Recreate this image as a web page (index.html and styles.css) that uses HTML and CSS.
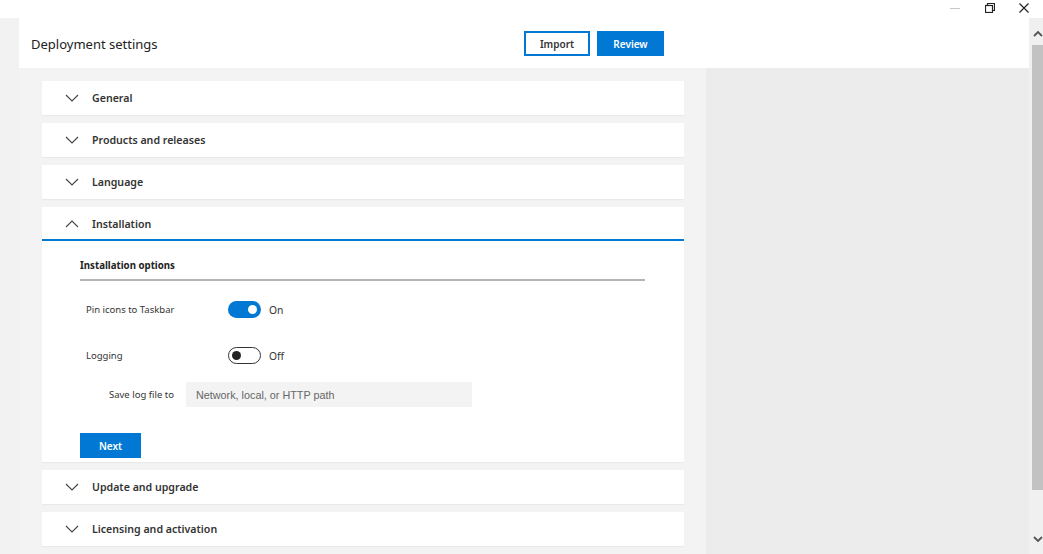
FILE: index.html
```html
<!DOCTYPE html>
<html>
<head>
<meta charset="utf-8">
<link rel="stylesheet" href="styles.css">
</head>
<body>
<div class="window">
  <div class="titlebar">
    <span class="wc wc-min"><svg width="10" height="10" viewBox="0 0 10 10"><line x1="0" y1="5.5" x2="10" y2="5.5" stroke="#c8c8c8" stroke-width="1"/></svg></span>
    <span class="wc wc-max"><svg width="10" height="10" viewBox="0 0 10 10"><rect x="0.5" y="2.5" width="7" height="7" fill="none" stroke="#222" stroke-width="1.2"/><polyline points="2.5,2.5 2.5,0.5 9.5,0.5 9.5,7.5 7.5,7.5" fill="none" stroke="#222" stroke-width="1.2"/></svg></span>
    <span class="wc wc-close"><svg width="10" height="10" viewBox="0 0 10 10"><path d="M0.5 0.5 L9.5 9.5 M9.5 0.5 L0.5 9.5" stroke="#222" stroke-width="1.2"/></svg></span>
  </div>
  <div class="main">
    <div class="leftstrip"></div>
    <div class="app">
      <div class="header">
        <div class="title">Deployment settings</div>
        <div class="actions">
          <button class="btn btn-outline">Import</button>
          <button class="btn btn-primary">Review</button>
        </div>
      </div>
      <div class="body">
        <div class="content">
          <div class="panel">
            <div class="panel-head">
              <svg class="chev" width="14" height="8" viewBox="0 0 14 8"><polyline points="1,1 7,7 13,1" fill="none" stroke="#444" stroke-width="1.1"/></svg>
              <span class="panel-title">General</span>
            </div>
          </div>
          <div class="panel">
            <div class="panel-head">
              <svg class="chev" width="14" height="8" viewBox="0 0 14 8"><polyline points="1,1 7,7 13,1" fill="none" stroke="#444" stroke-width="1.1"/></svg>
              <span class="panel-title">Products and releases</span>
            </div>
          </div>
          <div class="panel">
            <div class="panel-head">
              <svg class="chev" width="14" height="8" viewBox="0 0 14 8"><polyline points="1,1 7,7 13,1" fill="none" stroke="#444" stroke-width="1.1"/></svg>
              <span class="panel-title">Language</span>
            </div>
          </div>
          <div class="panel panel-open">
            <div class="panel-head">
              <svg class="chev" width="14" height="8" viewBox="0 0 14 8"><polyline points="1,7 7,1 13,7" fill="none" stroke="#444" stroke-width="1.1"/></svg>
              <span class="panel-title">Installation</span>
            </div>
            <div class="panel-body">
              <div class="section-title">Installation options</div>
              <div class="row row-pin">
                <span class="label">Pin icons to Taskbar</span>
                <span class="toggle toggle-on"><span class="knob"></span></span>
                <span class="state">On</span>
              </div>
              <div class="row row-log">
                <span class="label">Logging</span>
                <span class="toggle toggle-off"><span class="knob"></span></span>
                <span class="state">Off</span>
              </div>
              <div class="row row-path">
                <span class="label-sub">Save log file to</span>
                <div class="input">Network, local, or HTTP path</div>
              </div>
              <button class="btn btn-primary btn-next">Next</button>
            </div>
          </div>
          <div class="panel">
            <div class="panel-head">
              <svg class="chev" width="14" height="8" viewBox="0 0 14 8"><polyline points="1,1 7,7 13,1" fill="none" stroke="#444" stroke-width="1.1"/></svg>
              <span class="panel-title">Update and upgrade</span>
            </div>
          </div>
          <div class="panel">
            <div class="panel-head">
              <svg class="chev" width="14" height="8" viewBox="0 0 14 8"><polyline points="1,1 7,7 13,1" fill="none" stroke="#444" stroke-width="1.1"/></svg>
              <span class="panel-title">Licensing and activation</span>
            </div>
          </div>
        </div>
        <div class="side"></div>
      </div>
    </div>
    <div class="scrollbar">
      <svg class="sb-arrow" width="10" height="7" viewBox="0 0 10 7"><polyline points="1,6 5,2 9,6" fill="none" stroke="#555" stroke-width="1.8"/></svg>
      <div class="sb-thumb"></div>
      <div class="sb-rest"></div>
      <svg class="sb-arrow" width="10" height="7" viewBox="0 0 10 7"><polyline points="1,1 5,5 9,1" fill="none" stroke="#555" stroke-width="1.8"/></svg>
    </div>
  </div>
</div>
</body>
</html>
```
FILE: styles.css
```css
* { box-sizing: border-box; }
html, body { margin: 0; padding: 0; }
body {
  width: 1043px;
  height: 554px;
  overflow: hidden;
  background: #ffffff;
  font-family: "Noto Sans", "Open Sans", sans-serif;
  color: #222;
}
.window { width: 1043px; height: 554px; display: flex; flex-direction: column; }
.titlebar {
  height: 18px;
  display: flex;
  justify-content: flex-end;
  align-items: flex-start;
  background: #fff;
}
.wc { width: 34px; height: 18px; display: flex; justify-content: center; padding-top: 3px; }
.wc-min { margin-right: 1px; }
.wc-close { margin-right: 2px; }
.main { flex: 1; display: flex; min-height: 0; }
.leftstrip { width: 19px; background: #f2f2f2; }
.app { width: 1010px; display: flex; flex-direction: column; }
.header {
  height: 50px;
  background: #fff;
  display: flex;
  align-items: center;
  padding-left: 12px;
}
.title { width: 493px; font-size: 13px; color: #222; padding-top: 2px; }
.actions { display: flex; gap: 7px; }
.btn {
  height: 25px;
  font-family: "Noto Sans", "Open Sans", sans-serif;
  font-size: 10px;
  font-weight: 600;
  border: 2px solid #0078d4;
  padding: 1px 0 0 0;
  cursor: pointer;
}
.btn-outline { width: 66px; background: #fff; color: #333; }
.btn-primary { width: 67px; background: #0078d4; color: #fff; }
.body { flex: 1; display: flex; min-height: 0; }
.content {
  width: 687px;
  background: #f3f3f3;
  padding: 13px 22px 0 23px;
  display: flex;
  flex-direction: column;
  gap: 8px;
}
.side { flex: 1; background: #ececec; }
.panel { background: #fff; box-shadow: 0 1px 1px rgba(0,0,0,0.04); }
.panel-head {
  height: 34px;
  display: flex;
  align-items: center;
  padding-left: 23px;
}
.chev { margin-right: 13px; }
.panel-title { font-size: 10.6px; font-weight: 600; color: #333; }
.panel-open .panel-head { border-bottom: 2px solid #0078d4; height: 34px; padding-top: 2px; }
.panel-body { height: 221px; padding: 18px 38px 0 38px; display: flex; flex-direction: column; }
.section-title {
  width: 565px;
  font-size: 9.7px;
  font-weight: 700;
  color: #222;
  padding-bottom: 7px;
  border-bottom: 2px solid #b4b4b4;
}
.row { display: flex; align-items: center; }
.row-pin { margin-top: 20px; height: 17px; padding-left: 6px; }
.row-log { margin-top: 29px; height: 17px; padding-left: 6px; }
.row-path { margin-top: 18px; height: 25px; padding-left: 29px; }
.label { width: 142px; font-size: 9.5px; color: #333; }
.label-sub { width: 77px; font-size: 9.5px; color: #333; }
.state { font-size: 10.3px; color: #333; margin-left: 8px; }
.toggle {
  width: 33px;
  height: 17px;
  border-radius: 9px;
  display: flex;
  align-items: center;
  padding: 0 4px;
}
.toggle .knob { width: 9px; height: 9px; border-radius: 50%; }
.toggle-on { background: #0078d4; justify-content: flex-end; }
.toggle-on .knob { background: #fff; }
.toggle-off { background: #fff; border: 1px solid #333; justify-content: flex-start; padding: 0 3px; }
.toggle-off .knob { background: #222; }
.input {
  width: 286px;
  height: 25px;
  background: #f3f3f3;
  font-family: "Liberation Sans", Arial, sans-serif;
  font-size: 10.8px;
  color: #666;
  display: flex;
  align-items: center;
  padding-left: 10px;
}
.btn-next { margin-top: 26px; width: 61px; height: 25px; }
.scrollbar {
  width: 14px;
  background: #f0f0f0;
  display: flex;
  flex-direction: column;
  align-items: center;
}
.sb-arrow { margin-left: 3px; flex: none; }
.scrollbar .sb-arrow:first-child { margin-top: 12px; margin-bottom: 8px; }
.sb-thumb { width: 11px; margin-left: 3px; height: 445px; background: #c2c2c2; }
.sb-rest { flex: 1; }
.scrollbar .sb-arrow:last-child { margin-bottom: 11px; }
```
